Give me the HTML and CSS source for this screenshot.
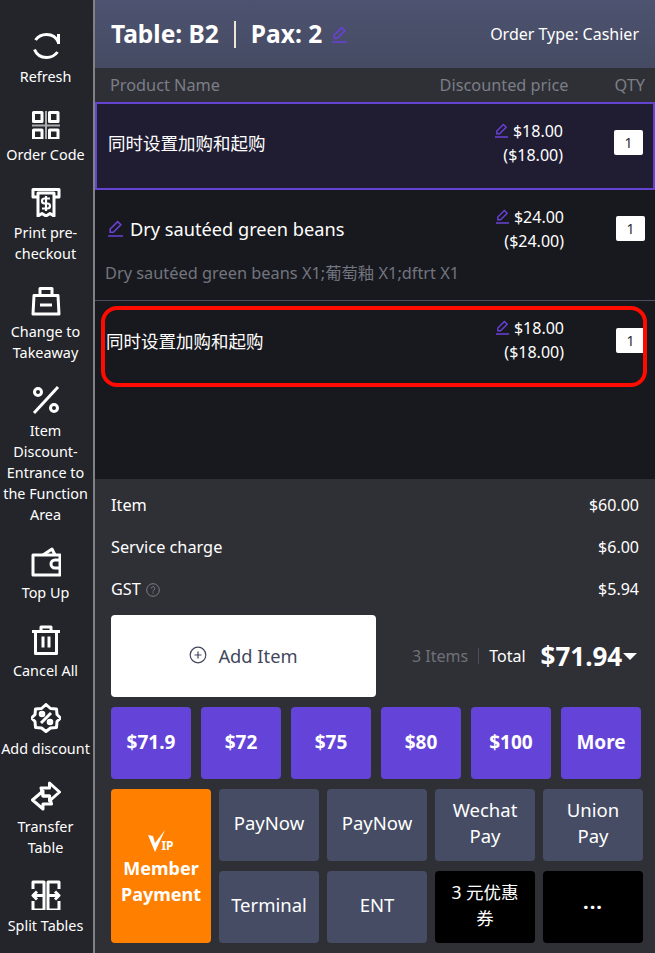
FILE: index.html
```html
<!DOCTYPE html>
<html lang="en">
<head>
<meta charset="utf-8">
<title>Cashier</title>
<link rel="stylesheet" href="styles.css">
</head>
<body>
<div class="app">
  <aside class="side">
    <div class="tool">
      <svg class="ico" viewBox="0 0 30 30"><path d="M27.500 11.500C25.500 6.500 21 3.500 15.500 3.500 11 3.500 7 5.500 4.500 9M3.500 18.500C5.500 23.500 10 26.500 15.500 26.500 20 26.500 24 24.500 26.500 21"/><path d="M27.500 3v10"/></svg>
      <span>Refresh</span>
    </div>
    <div class="tool">
      <svg class="ico" viewBox="0 0 30 30"><path class="qr-gap" d="M1 16.500h28M15 2v28"/><path d="M2.500 3.500h8.500v9H2.500zM18.500 3.500H27v9h-8.500zM2.500 21H11v8.500H2.500zM18.500 21H27v8.500h-8.500z"/></svg>
      <span>Order Code</span>
    </div>
    <div class="tool">
      <svg class="ico" viewBox="0 0 30 30"><path d="M6.500 10H2V2.500h26V10h-4.500"/><path d="M7 6v23l4-2.500 4 2.500 4-2.500 4 2.500V6z"/><path class="thin" d="M19 11.500h-5.500a2 2 0 0 0 0 5h3a2 2 0 0 1 0 5H11M15 9v15"/></svg>
      <span>Print pre-checkout</span>
    </div>
    <div class="tool">
      <svg class="ico" viewBox="0 0 30 30"><path d="M3 9.500h24l1 18.500H2z"/><path d="M9 9.500V2.500h12v7"/><path d="M9 19h12"/></svg>
      <span>Change to Takeaway</span>
    </div>
    <div class="tool">
      <svg class="ico" viewBox="0 0 30 30"><path d="M27 2 3 28"/><circle cx="7" cy="7" r="3.500"/><circle cx="23" cy="23" r="3.500"/></svg>
      <span>Item Discount-Entrance to the Function Area</span>
    </div>
    <div class="tool">
      <svg class="ico" viewBox="0 0 30 30"><path d="M29 8H2v20h27z"/><path d="M12 8l9-6 3 6"/><path d="M29 13h-5a4 4 0 0 0 0 8h5"/></svg>
      <span>Top Up</span>
    </div>
    <div class="tool">
      <svg class="ico" viewBox="0 0 30 30"><path d="M1 6.500h28"/><path d="M10 6.500V2h10v4.500"/><path d="M4.500 6.500v22h21v-22"/><path d="M12 11.500v11M18 11.500v11"/></svg>
      <span>Cancel All</span>
    </div>
    <div class="tool">
      <svg class="ico" viewBox="0 0 30 30"><path d="M15 1.500l4.500 4 6 .5.500 5.500 3.500 3.500-3.500 3.500-.5 6-6 .5-4.500 3.500-4.500-3.500-6-.5-.5-6L.5 15 4 11.500l.5-5.500 6-.5z"/><path d="M20 10 10 20"/><circle cx="11" cy="11" r="1.800"/><circle cx="19" cy="19" r="1.800"/></svg>
      <span>Add discount</span>
    </div>
    <div class="tool">
      <svg class="ico" viewBox="0 0 30 30"><path d="M18.500 2l10 9-10 9v-5H12l-2-8h8.500z"/><path d="M12 28 1.500 19l10.500-9v5h6.500l2 8H12z"/></svg>
      <span>Transfer Table</span>
    </div>
    <div class="tool">
      <svg class="ico" viewBox="0 0 30 30"><path d="M2 9V2h11v28H2v-9"/><path d="M28 9V2H17v28h11v-9"/><path d="M12 15.500H2M6 11.500l-4 4 4 4"/><path d="M18 15.500h10M24 11.500l4 4-4 4"/></svg>
      <span>Split Tables</span>
    </div>
  </aside>
  <main class="main">
    <header class="top">
      <h1 class="title">Table: B2<i class="sep"></i>Pax: 2
        <svg class="pen pen-lg" viewBox="0 0 16 16"><path d="M1 15h14M3 11.500v-3l7-7 3 3-7 7z"/></svg>
      </h1>
      <span class="otype">Order Type: Cashier</span>
    </header>
    <div class="thead">
      <span class="th-name">Product Name</span>
      <span class="th-price">Discounted price</span>
      <span class="th-qty">QTY</span>
    </div>
    <section class="list">
      <div class="row row-a">
        <span class="name">同时设置加购和起购</span>
        <div class="price">
          <span><svg class="pen" viewBox="0 0 16 16"><path d="M1 15h14M3 11.500v-3l7-7 3 3-7 7z"/></svg>$18.00</span>
          <span>($18.00)</span>
        </div>
        <span class="qty">1</span>
      </div>
      <div class="row row-b">
        <div class="row-main">
          <span class="name name-en"><svg class="pen pen-md" viewBox="0 0 16 16"><path d="M1 15h14M3 11.500v-3l7-7 3 3-7 7z"/></svg>Dry sautéed green beans</span>
          <div class="price">
            <span><svg class="pen" viewBox="0 0 16 16"><path d="M1 15h14M3 11.500v-3l7-7 3 3-7 7z"/></svg>$24.00</span>
            <span>($24.00)</span>
          </div>
          <span class="qty">1</span>
        </div>
        <p class="sub">Dry sautéed green beans X1;葡萄釉 X1;dftrt X1</p>
      </div>
      <div class="row row-c">
        <span class="name">同时设置加购和起购</span>
        <div class="price">
          <span><svg class="pen" viewBox="0 0 16 16"><path d="M1 15h14M3 11.500v-3l7-7 3 3-7 7z"/></svg>$18.00</span>
          <span>($18.00)</span>
        </div>
        <span class="qty">1</span>
        <div class="mark"></div>
      </div>
    </section>
    <section class="bottom">
      <div class="line"><span>Item</span><span>$60.00</span></div>
      <div class="line"><span>Service charge</span><span>$6.00</span></div>
      <div class="line"><span>GST <svg class="help" viewBox="0 0 14 14"><circle cx="7" cy="7" r="6.300"/><path d="M5.200 5.500a1.800 1.800 0 1 1 2.800 1.500c-.7.400-1 .7-1 1.500M7 9.500v1.200"/></svg></span><span>$5.94</span></div>
      <div class="total-row">
        <button class="add"><svg class="plus" viewBox="0 0 18 18"><circle cx="9" cy="9" r="7.800"/><path d="M9 5.500v7M5.500 9h7"/></svg>Add Item</button>
        <div class="sum">
          <span class="count">3 Items</span>
          <span class="total">Total</span>
          <strong class="amount">$71.94</strong>
          <i class="caret"></i>
        </div>
      </div>
      <div class="quick">
        <button>$71.9</button><button>$72</button><button>$75</button><button>$80</button><button>$100</button><button>More</button>
      </div>
      <div class="pay">
        <button class="vip">
          <span class="vip-logo"><svg viewBox="0 0 18 22"><path d="M0 5l5 1 2 7L17 0 7 22z"/></svg><em>IP</em></span>
          Member Payment
        </button>
        <button>PayNow</button>
        <button>PayNow</button>
        <button>Wechat Pay</button>
        <button>Union Pay</button>
        <button>Terminal</button>
        <button>ENT</button>
        <button class="blk">3 元优惠券</button>
        <button class="blk dots">...</button>
      </div>
    </section>
  </main>
</div>
</body>
</html>
```
FILE: styles.css
```css
* { box-sizing: border-box; }
html, body { margin: 0; height: 100%; }
body {
  font-family: "Noto Sans", "Noto Sans CJK SC", sans-serif;
  color: #fff;
  background: #24252a;
  overflow: hidden;
}
.app { display: flex; width: 655px; height: 953px; }

.side {
  width: 95px;
  flex: none;
  background: #24252a;
  border-right: 2px solid #808185;
  padding-top: 31px;
  display: flex;
  flex-direction: column;
  gap: 22px;
}
.tool {
  width: 91px;
  display: flex;
  flex-direction: column;
  align-items: center;
  font-size: 14.4px;
  line-height: 21px;
  text-align: center;
}
.ico {
  width: 30px;
  height: 30px;
  margin-bottom: 5px;
  fill: none;
  stroke: #fff;
  stroke-width: 3;
  stroke-linejoin: round;
}
.ico .thin { stroke-width: 2.200; }
.ico .qr-gap { stroke: #a9abae; stroke-width: 2; }

.main { flex: 1; min-width: 0; display: flex; flex-direction: column; }
.top {
  height: 68px;
  flex: none;
  background: linear-gradient(#4d5370, #454b62);
  display: flex;
  align-items: center;
  justify-content: space-between;
  padding: 0 16px;
}
.title {
  margin: 0;
  font-size: 24.500px;
  font-weight: 700;
  line-height: 32px;
  display: flex;
  align-items: center;
}
.sep { width: 2px; height: 27px; background: #ece6da; margin: 1px 15px 0; }
.otype { font-size: 16px; }
.pen { width: 15px; height: 15px; margin-right: 4px; fill: none; stroke: #6a41d8; stroke-width: 1.500; vertical-align: -1px; }
.pen-lg { width: 17px; height: 17px; margin-left: 9px; margin-right: 0; }
.pen-md { width: 17px; height: 17px; margin-right: 6px; vertical-align: -1px; }

.thead {
  height: 34px;
  flex: none;
  background: #2f3036;
  color: #7b7e87;
  font-size: 16.300px;
  display: flex;
  align-items: center;
  padding: 0 10px 0 15px;
}
.th-name { flex: 1; }
.th-qty { margin-left: 46px; }

.list { flex: 1; min-height: 0; background: #18191e; display: flex; flex-direction: column; }
.row, .row-main { display: flex; align-items: center; }
.name { flex: 1; font-size: 17.500px; }
.name-en { font-size: 18.200px; }
.price { display: flex; flex-direction: column; align-items: flex-end; font-size: 16px; line-height: 24px; }
.qty {
  width: 29px;
  height: 25px;
  margin-left: 51px;
  background: #fff;
  color: #2b2c31;
  font-size: 14px;
  line-height: 25px;
  text-align: center;
  border-radius: 2px;
}
.row-a {
  height: 88px;
  background: #201d33;
  border: 2px solid #6442d2;
  padding: 0 10px 7px 11px;
}
.row-a .price { padding-top: 1px; }
.row-b {
  height: 111px;
  display: block;
  border-bottom: 1px solid #4a5060;
  padding: 14px 10px 0 12px;
}
.row-b .qty, .row-c .qty { margin-left: 52px; }
.row-main { height: 49px; }
.sub { margin: 8px 0 0 -2px; color: #72757e; font-size: 16.350px; line-height: 24px; }
.row-c {
  position: relative;
  height: 80px;
  padding: 0 10px 2px 11px;
}
.mark {
  position: absolute;
  left: 6px;
  right: 8px;
  top: 5px;
  height: 81px;
  border: 4px solid #ff0b00;
  border-radius: 16px;
}

.bottom { height: 474px; flex: none; background: #2f3036; padding: 14px 16px 0; }
.line {
  height: 42px;
  display: flex;
  justify-content: space-between;
  font-size: 16px;
  line-height: 24px;
}
.line span:first-child { font-size: 16.300px; }
.help { width: 14px; height: 14px; fill: none; stroke: #7b7e87; stroke-width: 1; vertical-align: -2px; margin-left: 1px; }
.total-row { display: flex; align-items: center; height: 82px; margin-top: -4px; }
button { font-family: inherit; border: 0; color: #fff; padding: 0; cursor: pointer; }
.add {
  width: 265px;
  height: 82px;
  flex: none;
  background: #fff;
  color: #43475c;
  border-radius: 4px;
  font-size: 18.300px;
  padding-bottom: 2px;
  display: flex;
  align-items: center;
  justify-content: center;
}
.plus { width: 18px; height: 18px; margin-right: 11px; fill: none; stroke: #43475c; stroke-width: 1.200; }
.sum { flex: 1; display: flex; align-items: center; padding-left: 36px; white-space: nowrap; }
.count { font-size: 16px; color: #6e7079; padding-right: 10px; margin-right: 10px; line-height: 16px; border-right: 1px solid #4d505b; }
.total { font-size: 16px; margin-right: 0; }
.amount { font-size: 26px; font-weight: 700; margin-left: 15px; line-height: 30px; }
.caret { width: 0; height: 0; border: 7px solid transparent; border-top: 7px solid #fff; border-bottom: 0; margin-left: 1px; }
.quick { display: grid; grid-template-columns: repeat(6, 80px); gap: 10px; margin-top: 10px; }
.quick button { height: 72px; background: #6444d8; border-radius: 4px; font-size: 19px; font-weight: 700; padding-bottom: 2px; }
.pay {
  display: grid;
  grid-template-columns: repeat(5, 100px);
  grid-auto-rows: 72px;
  column-gap: 8px;
  row-gap: 10px;
  margin-top: 10px;
}
.pay button { background: #454c64; border-radius: 4px; font-size: 18.500px; line-height: 26px; padding: 0 12px 4px; }
.pay .vip { grid-row: span 2; background: #ff8000; font-size: 18px; font-weight: 700; line-height: 26px; padding: 4px 6px 0; display: flex; flex-direction: column; align-items: center; justify-content: center; }
.vip-logo { display: flex; align-items: flex-end; height: 22px; margin: 0 0 3px; }
.vip-logo svg { width: 18px; height: 22px; fill: #fff; }
.vip-logo em { font-style: normal; font-size: 12px; line-height: 12px; margin-left: -5px; }
.pay .blk { background: #000; font-size: 17.500px; }
.pay .dots { font-size: 20px; font-weight: 700; letter-spacing: 1px; padding-bottom: 10px; }
```
